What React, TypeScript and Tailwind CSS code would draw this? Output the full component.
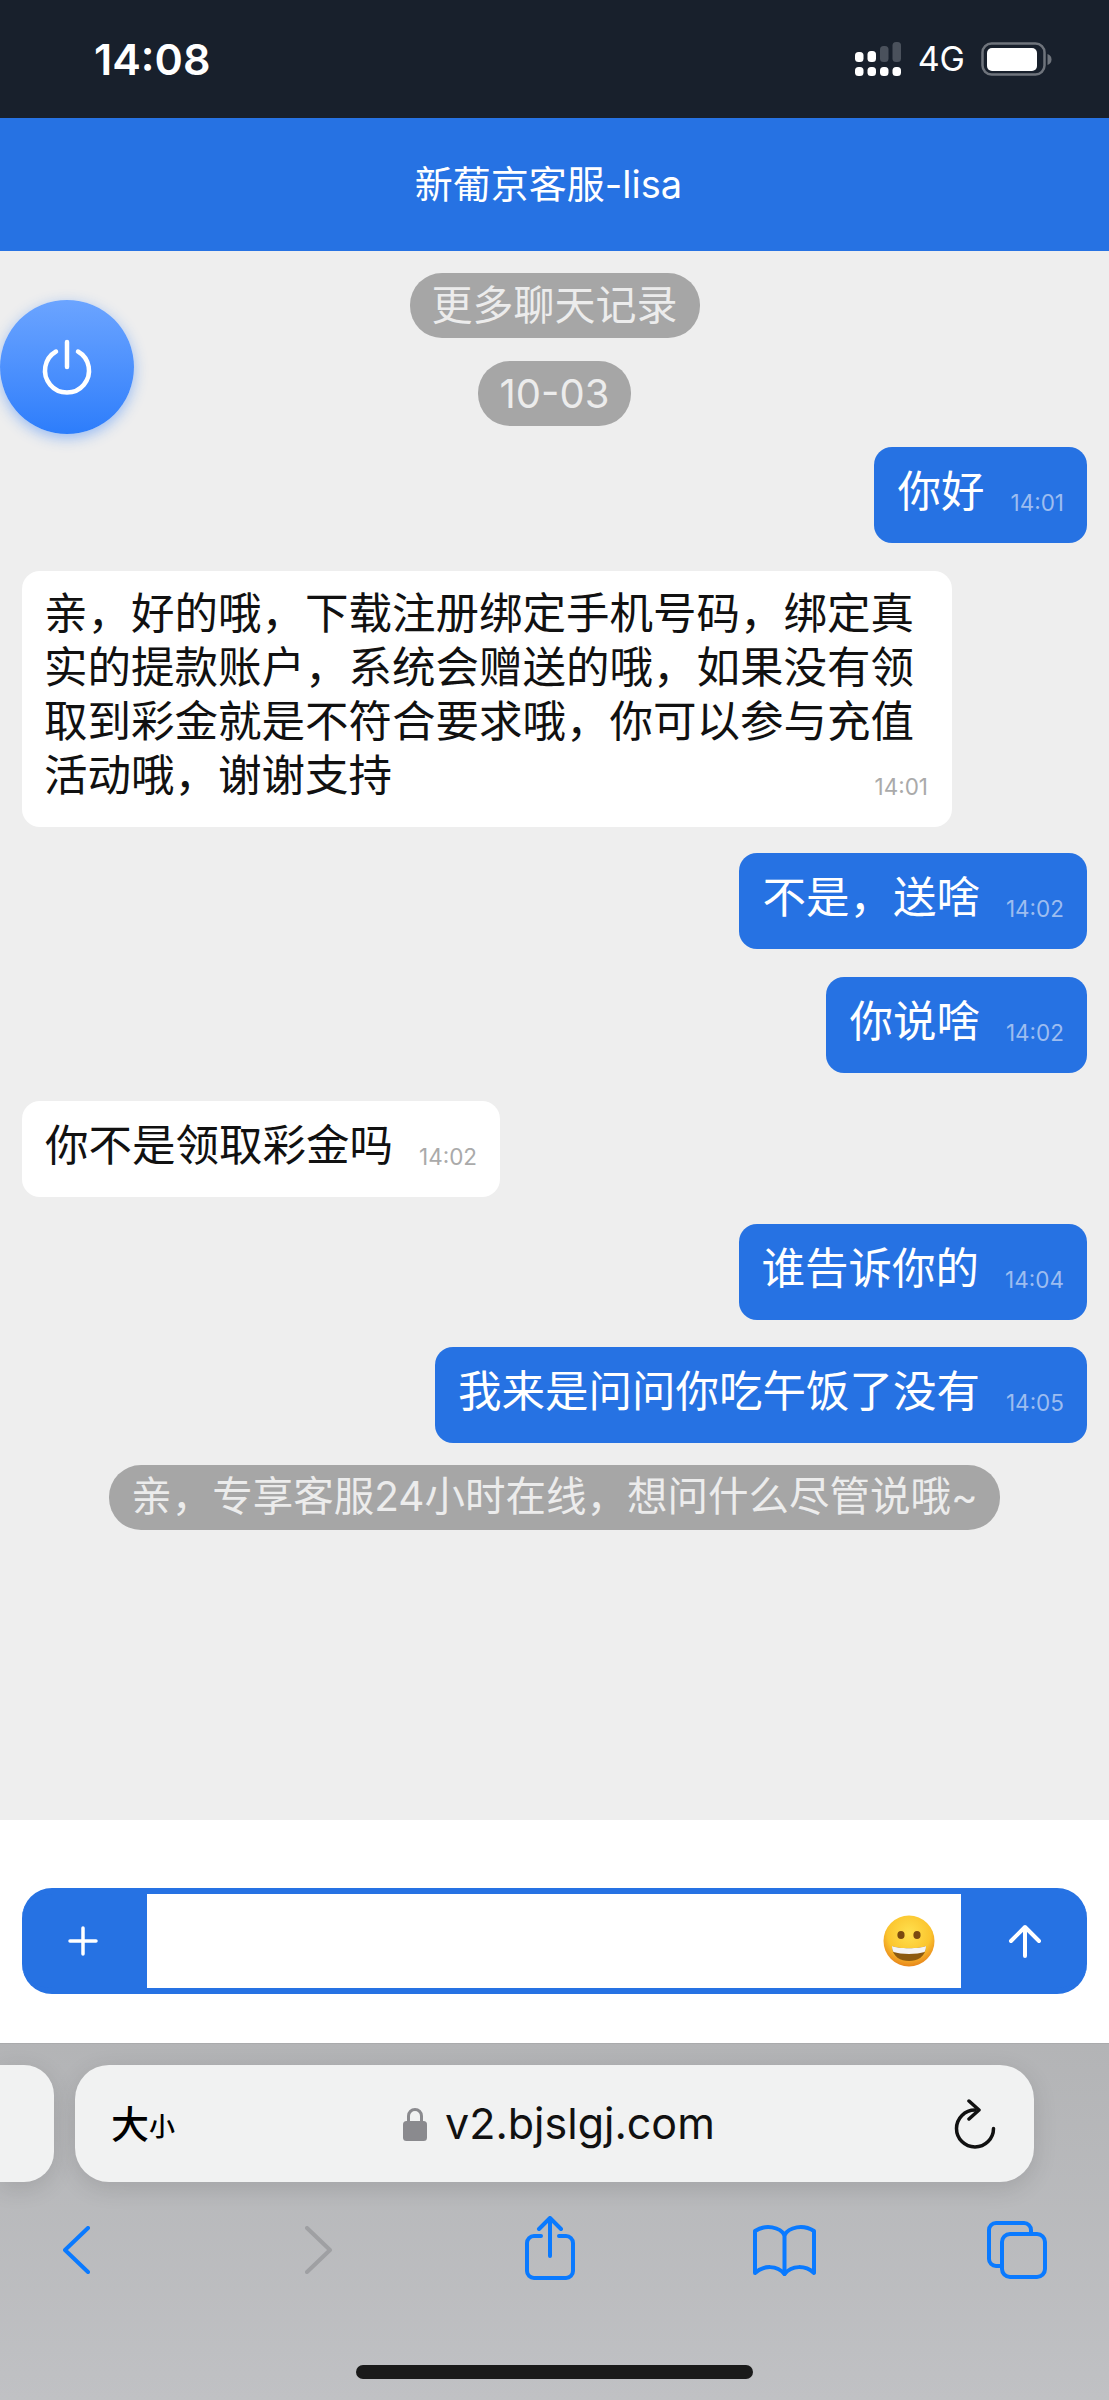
const cjk = "font-['Inter','Noto_Sans_CJK_SC',sans-serif]";

function Signal() {
	return (
		<svg width="46" height="35" viewBox="0 0 46 35" className="block">
			<g fill="#fff">
				<rect x="0" y="25" width="8.5" height="9" rx="3.5" />
				<rect x="12.5" y="25" width="8.5" height="9" rx="3.5" />
				<rect x="25" y="25" width="8.5" height="9" rx="3.5" />
				<rect x="37.5" y="25" width="8.5" height="9" rx="3.5" />
				<rect x="0" y="10" width="8.5" height="10" rx="3.5" />
				<rect x="12.5" y="9" width="8.5" height="11" rx="3.5" />
			</g>
			<g fill="#4a515c">
				<rect x="25" y="4" width="8.5" height="16" rx="3.5" />
				<rect x="37.5" y="0" width="8.5" height="20" rx="3.5" />
			</g>
		</svg>
	);
}

function Battery() {
	return (
		<svg width="71" height="35" viewBox="0 0 71 35" className="block">
			<rect x="1.5" y="1.5" width="62" height="31" rx="9" fill="none" stroke="#6f747c" strokeWidth="2.5" />
			<rect x="6" y="6" width="50" height="23" rx="5" fill="#fff" />
			<path d="M66.5 12 C69.5 13 70.5 15 70.5 17.5 C70.5 20 69.5 22 66.5 23 Z" fill="#6f747c" />
		</svg>
	);
}

function PowerButton() {
	return (
		<div className="absolute left-0 top-[300px] flex h-[134px] w-[134px] items-center justify-center rounded-full bg-linear-to-b from-[#6ba4ff] to-[#2c7dfb] shadow-[0_4px_14px_rgba(44,125,251,0.45)]">
			<svg width="52" height="56" viewBox="0 0 52 56" fill="none" stroke="#fff" strokeLinecap="round" strokeWidth="4.5">
				<path d="M26 3 V28" />
				<path d="M15 12.5 A22 22 0 1 0 37 12.5" />
			</svg>
		</div>
	);
}

function Pill({ text, className }: { text: string; className: string }) {
	return <div className={`flex h-[65px] items-center rounded-[32px] bg-[#a6a6a6] text-[#ececec] ${className}`}>{text}</div>;
}

function Mine({ text, time, className }: { text: string; time: string; className: string }) {
	return (
		<div className={`flex h-[96px] self-end whitespace-nowrap rounded-[18px] bg-[#2672e3] pl-[23px] pr-[23px] pt-[17px] text-white ${className}`}>
			<span className="text-[43.5px] leading-[54px]">{text}</span>
			<span className="ml-[26px] mt-[24px] text-[22.5px] leading-[30px] text-[#9dbdf0]">{time}</span>
		</div>
	);
}

function Smiley() {
	return (
		<svg width="52" height="52" viewBox="0 0 52 52">
			<defs>
				<radialGradient id="face" cx="50%" cy="35%" r="65%">
					<stop offset="0%" stopColor="#ffe14f" />
					<stop offset="65%" stopColor="#fbc52e" />
					<stop offset="100%" stopColor="#e8851b" />
				</radialGradient>
			</defs>
			<circle cx="26" cy="26" r="25.5" fill="url(#face)" />
			<ellipse cx="18" cy="20" rx="3.6" ry="4" fill="#7a4a10" />
			<ellipse cx="34" cy="20" rx="3.6" ry="4" fill="#7a4a10" />
			<path d="M9 31 C15 34 37 34 43 31 C43 42 34 46 26 46 C18 46 9 42 9 31 Z" fill="#8c5a10" />
			<path d="M9 31 C15 34 37 34 43 31 C43 33.5 42.5 35.5 41.5 37 C34 39.5 18 39.5 10.5 37 C9.5 35.5 9 33.5 9 31 Z" fill="#f4f4f4" />
		</svg>
	);
}

export default function App() {
	return (
		<div className={`relative flex h-[2400px] w-[1109px] flex-col overflow-hidden bg-white ${cjk}`}>
			{/* status bar */}
			<div className="flex h-[118px] shrink-0 items-center justify-between bg-[#18202c] pl-[94px] pr-[57px] text-white">
				<span className="text-[43px] font-semibold leading-none">14:08</span>
				<div className="flex items-center">
					<Signal />
					<span className="ml-[17px] mr-[16px] text-[34px] leading-none">4G</span>
					<Battery />
				</div>
			</div>

			{/* header */}
			<div className="flex h-[133px] shrink-0 items-center justify-center bg-[#2672e3] pr-[12px] text-[38px] text-white">新葡京客服-lisa</div>

			{/* messages */}
			<div className="flex h-[1569px] shrink-0 flex-col items-center bg-[#eeeeee] px-[22px] pt-[22px]">
				<Pill text="更多聊天记录" className="px-[22px] text-[41px]" />
				<div className="mt-[23px]">
					<Pill text="10-03" className="px-[22px] text-[40px]" />
				</div>
				<Mine text="你好" time="14:01" className="mt-[21px]" />

				<div className="mt-[28px] h-[256px] w-[930px] self-start rounded-[18px] bg-white pl-[22px] pr-[24px] pt-[15px] text-[43.5px] leading-[54px] text-[#111]">
					亲，好的哦，下载注册绑定手机号码，绑定真实的提款账户，系统会赠送的哦，如果没有领取到彩金就是不符合要求哦，你可以参与充值活动哦，谢谢支持
					<span className="float-right mt-[24px] text-[22.5px] leading-[30px] text-[#aaaaaa]">14:01</span>
				</div>

				<Mine text="不是，送啥" time="14:02" className="mt-[26px]" />
				<Mine text="你说啥" time="14:02" className="mt-[28px]" />

				<div className="mt-[28px] flex h-[96px] self-start whitespace-nowrap rounded-[18px] bg-white pl-[23px] pr-[23px] pt-[17px] text-[#111]">
					<span className="text-[43.5px] leading-[54px]">你不是领取彩金吗</span>
					<span className="ml-[26px] mt-[24px] text-[22.5px] leading-[30px] text-[#aaaaaa]">14:02</span>
				</div>

				<Mine text="谁告诉你的" time="14:04" className="mt-[27px]" />
				<Mine text="我来是问问你吃午饭了没有" time="14:05" className="mt-[27px]" />
				<div className="mt-[22px]">
					<Pill text="亲，专享客服24小时在线，想问什么尽管说哦~" className="px-[22px] text-[40.5px]" />
				</div>
			</div>

			{/* input */}
			<div className="flex h-[223px] shrink-0 items-start justify-center bg-white pt-[68px]">
				<div className="flex h-[106px] w-[1065px] overflow-hidden rounded-[30px] border-y-[6px] border-[#2672e3] bg-[#2672e3]">
					<div className="flex w-[125px] items-center justify-center pr-[3px]">
						<svg width="30" height="30" viewBox="0 0 30 30" stroke="#fff" strokeWidth="3.5" strokeLinecap="round">
							<path d="M15 2 V28 M2 15 H28" />
						</svg>
					</div>
					<div className="flex flex-1 items-center justify-end bg-white pr-[26px]">
						<Smiley />
					</div>
					<div className="flex w-[126px] items-center justify-center pl-[2px]">
						<svg width="34" height="34" viewBox="0 0 34 34" fill="none" stroke="#fff" strokeWidth="4" strokeLinecap="round" strokeLinejoin="round">
							<path d="M17 32 V3 M3 17 L17 3 L31 17" />
						</svg>
					</div>
				</div>
			</div>

			{/* safari chrome */}
			<div className="flex flex-1 flex-col border-t border-[#a9aaac] bg-linear-to-b from-[#b3b4b6] to-[#c0c1c4]">
				<div className="mt-[21px] flex h-[117px] gap-[21px]">
					<div className="w-[54px] rounded-r-[30px] bg-[#f1f2f2] shadow-[0_6px_24px_rgba(0,0,0,0.12)]" />
					<div className="flex w-[959px] items-center rounded-[34px] bg-[#f1f2f2] pl-[36px] pr-[38px] shadow-[0_6px_24px_rgba(0,0,0,0.12)]">
						<div className="flex w-[292px] items-end text-black">
							<span className="text-[38px] font-medium leading-[40px]">大</span>
							<span className="text-[26px] font-medium leading-[34px]">小</span>
						</div>
						<svg width="24" height="34" viewBox="0 0 24 34" className="shrink-0">
							<path d="M5.5 15 V9 A6.5 6.5 0 0 1 18.5 9 V15" fill="none" stroke="#8a8a8e" strokeWidth="3" />
							<rect x="0" y="14" width="24" height="20" rx="3.5" fill="#8a8a8e" />
						</svg>
						<span className="ml-[18px] flex-1 text-[43px] leading-none text-[#111]">v2.bjslgj.com</span>
						<svg width="42" height="50" viewBox="0 0 42 50" fill="none" stroke="#111" strokeWidth="3.5" strokeLinecap="round" strokeLinejoin="round">
							<path d="M21 11 A18.5 18.5 0 1 0 39.5 29.5" />
							<path d="M15 2 L25 11 L15 20" />
						</svg>
					</div>
				</div>

				<div className="mt-[34px] flex h-[64px] items-center pl-[63px] pr-[62px]">
					<svg width="27" height="48" viewBox="0 0 27 48" className="mt-[4px]" fill="none" stroke="#0a7aff" strokeWidth="4" strokeLinecap="round" strokeLinejoin="round">
						<path d="M25 2 L2 24 L25 46" />
					</svg>
					<svg width="27" height="48" viewBox="0 0 27 48" className="ml-[215px] mt-[4px]" fill="none" stroke="#9fa0a3" strokeWidth="4" strokeLinecap="round" strokeLinejoin="round">
						<path d="M2 2 L25 24 L2 46" />
					</svg>
					<svg width="50" height="64" viewBox="0 0 50 64" className="ml-[193px]" fill="none" stroke="#0a7aff" strokeWidth="4" strokeLinecap="round" strokeLinejoin="round">
						<path d="M25 40 V3 M14 13 L25 2 L36 13" />
						<path d="M16 20 H9 A7 7 0 0 0 2 27 V55 A7 7 0 0 0 9 62 H41 A7 7 0 0 0 48 55 V27 A7 7 0 0 0 41 20 H34" />
					</svg>
					<svg width="63" height="52" viewBox="0 0 63 52" className="ml-[178px] mt-[4px]" fill="none" stroke="#0a7aff" strokeWidth="4" strokeLinecap="round" strokeLinejoin="round">
						<path d="M31.5 11 C27 3 13 0 2 7 V49 C11 41 24 41 31.5 50 C39 41 52 41 61 49 V7 C50 0 36 3 31.5 11 Z" />
						<path d="M31.5 11 V50" />
					</svg>
					<svg width="60" height="58" viewBox="0 0 60 58" className="ml-[171px] mt-[4px]" fill="none" stroke="#0a7aff" strokeWidth="4">
						<path d="M15 45 H9 A7 7 0 0 1 2 38 V9 A7 7 0 0 1 9 2 H37 A7 7 0 0 1 44 9 V13" />
						<rect x="15" y="13" width="43" height="43" rx="8" />
					</svg>
				</div>

				<div className="mx-auto mt-[85px] h-[14px] w-[397px] rounded-full bg-[#1a1a1a]" />
			</div>

			<PowerButton />
		</div>
	);
}
